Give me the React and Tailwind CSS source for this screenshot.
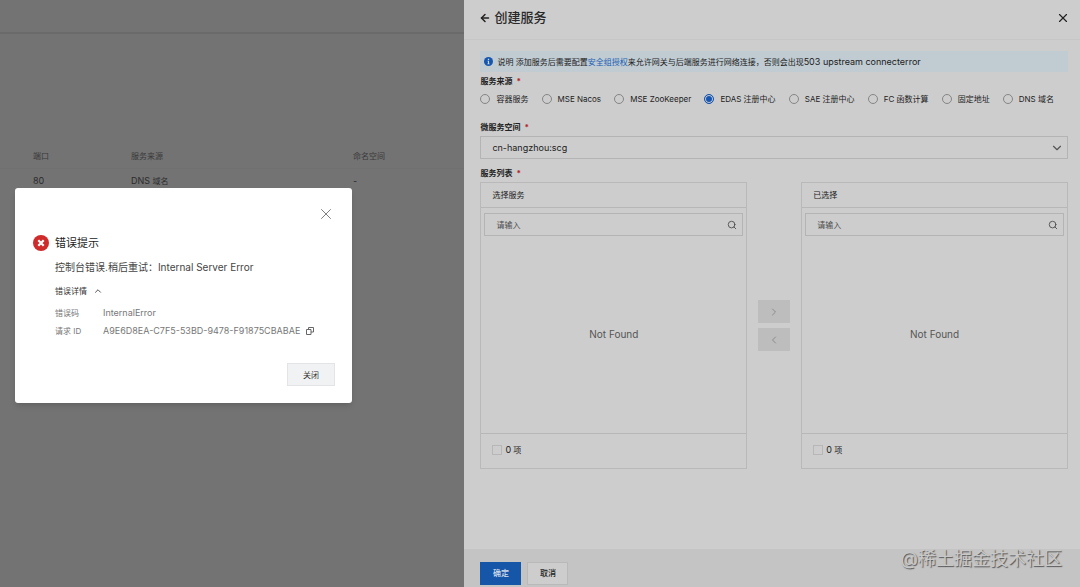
import { useId } from 'react';
import { ArrowLeft, ChevronDown, ChevronLeft, ChevronRight, ChevronUp, Search, X } from 'lucide-react';

const services = [{ port: '80', source: 'DNS', sourceCn: '域名', namespace: '-' }];

const sources = [
  { value: 'container', label: '容器服务' },
  { value: 'nacos', label: 'MSE Nacos' },
  { value: 'zookeeper', label: 'MSE ZooKeeper' },
  { value: 'edas', label: 'EDAS 注册中心' },
  { value: 'sae', label: 'SAE 注册中心' },
  { value: 'fc', label: 'FC 函数计算' },
  { value: 'fixed', label: '固定地址' },
  { value: 'dns', label: 'DNS 域名' },
];

function Required() {
  return <span className="ml-1 text-[#b3202c]">*</span>;
}

function ServiceList() {
  return (
    <main className="w-[43%] shrink-0 bg-[#737373] text-[8px] text-[#393939]">
      <div className="h-[34px] border-b-2 border-[#6a6a6a]" />
      <table className="mt-[110px] w-full table-fixed text-left">
        <thead>
          <tr className="h-6">
            <th className="w-[131px] pl-[33px] font-normal">端口</th>
            <th className="w-[222px] font-normal">服务来源</th>
            <th className="font-normal">命名空间</th>
          </tr>
        </thead>
        <tbody>
          {services.map((s) => (
            <tr key={s.port} className="h-6 border-t border-[#707070] text-[9px] text-[#2c2c2c]">
              <td className="pl-[33px]">{s.port}</td>
              <td>
                {s.source} <span className="text-[8px]">{s.sourceCn}</span>
              </td>
              <td>{s.namespace}</td>
            </tr>
          ))}
        </tbody>
      </table>
    </main>
  );
}

function TransferPanel({ title }) {
  const id = useId();

  return (
    <section className="flex h-[287px] min-w-0 flex-1 flex-col border border-[#b9b9b9]">
      <h3 className="flex h-[25px] shrink-0 items-center border-b border-[#b7b7b7] px-[11px]">{title}</h3>
      <div className="mx-[3px] mt-[5px] flex h-[23px] shrink-0 items-center border border-[#b4b4b4] pr-[5px] pl-[11px]">
        <input
          type="text"
          aria-label={title}
          placeholder="请输入"
          className="min-w-0 flex-1 bg-transparent outline-none placeholder:text-[#4c4c4c]"
        />
        <Search className="size-[10px] text-[#444]" />
      </div>
      <div className="flex flex-1 items-center justify-center text-[10px] text-[#555]">Not Found</div>
      <div className="flex h-[35px] shrink-0 items-center gap-[3px] border-t border-[#b7b7b7] px-[11px] pb-[2px]">
        <input
          id={id}
          type="checkbox"
          className="size-[10px] appearance-none border border-[#b7b7b7]"
        />
        <label htmlFor={id}><span className="text-[9px]">0</span> 项</label>
      </div>
    </section>
  );
}

function CreateDrawer() {
  return (
    <aside className="flex min-w-0 flex-1 flex-col bg-[#cdcdcd] text-[8px] text-[#222]">
      <header className="flex h-10 items-center border-b border-[#c6c6c6] pr-[10px] pb-[3px] pl-[15px]">
        <button type="button" aria-label="返回">
          <ArrowLeft className="size-3" strokeWidth={3} />
        </button>
        <h2 className="ml-[3px] text-[13px] font-medium text-[#2a2a2a]">创建服务</h2>
        <button type="button" aria-label="关闭抽屉" className="ml-auto">
          <X className="size-[14px]" strokeWidth={2} />
        </button>
      </header>

      <form className="flex flex-1 flex-col pt-[11px] pr-3 pb-4 pl-4">
        <div className="flex h-[21px] items-center bg-[#c0cbd2] px-1 text-[#1c1c1c]">
          <svg viewBox="0 0 10 10" className="mr-1 size-[9px]">
            <circle cx="5" cy="5" r="5" fill="#1656b0" />
            <path d="M4.3 2h1.4v1.4H4.3zM3.9 4.2h1.7v2.9h.6v.9H3.8v-.9h.6v-2h-.5z" fill="#cdd9e6" />
          </svg>
          <p className="whitespace-nowrap">
            说明 添加服务后需要配置
            <a href="#auth" className="text-[#1a5fb4]">安全组授权</a>
            来允许网关与后端服务进行网络连接，否则会出现
            <span className="text-[9px]">503 upstream connecterror</span>
          </p>
        </div>

        <fieldset>
          <legend className="h-[18px] leading-[18px] font-bold">服务来源<Required /></legend>
          <div className="flex h-[18px] items-center justify-between pr-[14px]">
            {sources.map((s) => (
              <label key={s.value} className="flex items-center gap-[6px] whitespace-nowrap">
                <input
                  type="radio"
                  name="source"
                  value={s.value}
                  defaultChecked={s.value === 'edas'}
                  className="size-[10px] appearance-none rounded-full border border-[#858585] checked:border-[#1656b0] checked:bg-[#1656b0] checked:shadow-[inset_0_0_0_1px_#cdcdcd]"
                />
                {s.label}
              </label>
            ))}
          </div>
        </fieldset>

        <label htmlFor="space" className="mt-[11px] h-[17px] leading-[17px] font-bold">微服务空间<Required /></label>
        <div className="grid items-center">
          <select
            id="space"
            className="col-start-1 row-start-1 h-[23px] w-full appearance-none border border-[#b4b4b4] px-[11px] text-[9px]"
          >
            <option>cn-hangzhou:scg</option>
          </select>
          <ChevronDown className="pointer-events-none col-start-1 row-start-1 mr-1 size-[14px] justify-self-end text-[#555]" strokeWidth={2} />
        </div>

        <h3 className="mt-[6px] h-[17px] leading-[17px] font-bold">服务列表<Required /></h3>
        <div className="flex items-center gap-[11px]">
          <TransferPanel title="选择服务" />
          <div className="flex flex-col gap-[5px]">
            <button type="button" aria-label="添加" className="flex h-[23px] w-8 items-center justify-center bg-[#bdbdbd] text-[#8c8c8c]">
              <ChevronRight className="size-3" />
            </button>
            <button type="button" aria-label="移除" className="flex h-[23px] w-8 items-center justify-center bg-[#bdbdbd] text-[#8c8c8c]">
              <ChevronLeft className="size-3" />
            </button>
          </div>
          <TransferPanel title="已选择" />
        </div>
      </form>

      <footer className="flex h-[38px] items-center gap-[6px] bg-[#c4c4c4] pt-[10px] pl-4">
        <button type="button" className="h-[23px] w-[41px] bg-[#1656a8] font-medium text-[#d4dfec]">确定</button>
        <button type="button" className="h-[23px] w-[41px] border border-[#b9b9b9] bg-[#cdcdcd] font-medium">取消</button>
      </footer>
    </aside>
  );
}

function ErrorDialog() {
  return (
    <div
      role="dialog"
      aria-labelledby="error-title"
      className="absolute top-[188px] left-[15px] w-[337px] rounded-[3px] bg-white pt-[17px] pr-[17px] pb-[17px] pl-[18px] text-[#555] shadow-md"
    >
      <div className="flex justify-end">
        <button type="button" aria-label="关闭弹窗">
          <X className="size-[18px]" strokeWidth={1} />
        </button>
      </div>
      <div className="mt-3 flex items-center gap-[6px]">
        <svg viewBox="0 0 16 16" className="size-4">
          <circle cx="8" cy="8" r="8" fill="#cf2b2b" />
          <path d="M5.3 5.3l5.4 5.4M10.7 5.3l-5.4 5.4" stroke="#fff" strokeWidth="2.2" />
        </svg>
        <h2 id="error-title" className="text-[11px] leading-4 text-[#222]">错误提示</h2>
      </div>
      <div className="pl-[22px]">
        <p className="mt-2 text-[10px] leading-4 text-[#444]">控制台错误.稍后重试：Internal Server Error</p>
        <button type="button" className="mt-2 flex items-center gap-[6px] text-[8px] leading-4 text-[#333]">
          错误详情
          <ChevronUp className="size-[10px]" />
        </button>
        <dl className="mt-[6px] grid grid-cols-[48px_1fr] gap-y-[2px] text-[8px] leading-4 text-[#777]">
          <dt>错误码</dt>
          <dd className="text-[9px]">InternalError</dd>
          <dt>请求 ID</dt>
          <dd className="flex items-center gap-[6px] text-[9px]">
            A9E6D8EA-C7F5-53BD-9478-F91875CBABAE
            <button type="button" aria-label="复制">
              <svg viewBox="0 0 16 16" className="size-2" fill="none" stroke="#666" strokeWidth="2">
                <path d="M1 5h9v10H1zM5 5V1h10v9h-5" />
              </svg>
            </button>
          </dd>
        </dl>
      </div>
      <div className="mt-6 flex justify-end">
        <button type="button" className="h-[23px] w-12 border border-[#e2e4e6] bg-[#f1f2f4] text-[8px] text-[#333]">关闭</button>
      </div>
    </div>
  );
}

export default function App() {
  return (
    <div className="relative flex min-h-screen font-[Inter,'Noto_Sans_CJK_SC',sans-serif]">
      <ServiceList />
      <CreateDrawer />
      <ErrorDialog />
      <div className="pointer-events-none absolute right-[18px] bottom-4 text-[18px] leading-6 text-[#c8c8c8] [text-shadow:1px_1px_1px_#555]">
        @稀土掘金技术社区
      </div>
    </div>
  );
}
